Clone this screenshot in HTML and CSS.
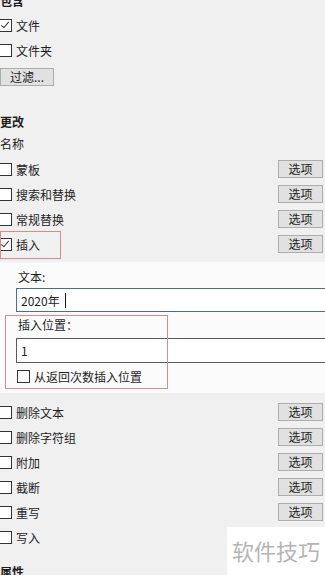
FILE: index.html
```html
<!DOCTYPE html>
<html lang="zh-CN">
<head>
  <meta charset="UTF-8" />
  <meta name="viewport" content="width=device-width, initial-scale=1.0"/>
  <title>重命名选项</title>
  <link rel="stylesheet" href="styles.css">
</head>
<body>
  <div class="page">

    <div class="heading first">包含</div>
    <div class="row"><span class="box checked"></span><span>文件</span></div>
    <div class="row"><span class="box"></span><span>文件夹</span></div>
    <div class="btn filter">过滤...</div>

    <div class="heading">更改</div>
    <div class="sub">名称</div>

    <div class="row"><span class="box"></span><span>蒙板</span><div class="btn opt">选项</div></div>
    <div class="row"><span class="box"></span><span>搜索和替换</span><div class="btn opt">选项</div></div>
    <div class="row"><span class="box"></span><span>常规替换</span><div class="btn opt">选项</div></div>
    <div class="row">
      <span class="box checked"></span><span>插入</span><div class="btn opt">选项</div>
      <div class="mark mark-insert"></div>
    </div>

    <div class="panel">
      <div class="label">文本:</div>
      <div class="field focus">2020年<span class="caret"></span></div>
      <div class="group">
        <div class="label">插入位置：</div>
        <div class="field plain">1</div>
        <div class="row inner"><span class="box"></span><span>从返回次数插入位置</span></div>
        <div class="mark mark-group"></div>
      </div>
    </div>

    <div class="rows-after">
      <div class="row"><span class="box"></span><span>删除文本</span><div class="btn opt">选项</div></div>
      <div class="row"><span class="box"></span><span>删除字符组</span><div class="btn opt">选项</div></div>
      <div class="row"><span class="box"></span><span>附加</span><div class="btn opt">选项</div></div>
      <div class="row"><span class="box"></span><span>截断</span><div class="btn opt">选项</div></div>
      <div class="row"><span class="box"></span><span>重写</span><div class="btn opt">选项</div></div>
      <div class="row"><span class="box"></span><span>写入</span></div>
    </div>

    <div class="heading last">属性</div>
  </div>

  <div class="watermark">软件技巧</div>
</body>
</html>
```

FILE: styles.css
```css
html, body {
  margin: 0;
  padding: 0;
  height: 575px;
  overflow: hidden;
}

body {
  background: #f0f0f0;
  color: #1e1e1e;
  font-family: "Noto Sans CJK SC", "Noto Sans", sans-serif;
  font-size: 12px;
  position: relative;
}

.page {
  margin-top: -11px;
}

.heading {
  font-weight: bold;
  height: 20px;
  line-height: 20px;
  margin-top: 26px;
}

.heading.first {
  margin-top: 0;
  height: 24px;
  line-height: 24px;
}

.heading.last {
  margin-top: 12px;
}

.sub {
  height: 20px;
  line-height: 20px;
  margin-top: 2px;
  margin-bottom: 3px;
}

.row {
  position: relative;
  display: flex;
  align-items: center;
  height: 25px;
}

.box {
  width: 11px;
  height: 11px;
  border: 1px solid #333;
  background: #fff;
  margin-left: -1px;
  margin-right: 4px;
  position: relative;
  flex-shrink: 0;
}

.box.checked::after {
  content: "";
  position: absolute;
  left: 3px;
  top: 0px;
  width: 3px;
  height: 7px;
  border-right: 1px solid #333;
  border-bottom: 1px solid #333;
  transform: rotate(40deg);
}

.btn {
  background: #e1e1e1;
  border: 1px solid #adadad;
  box-sizing: border-box;
  height: 18px;
  line-height: 16px;
  text-align: center;
}

.filter {
  width: 54px;
  margin-top: 5px;
}

.opt {
  position: absolute;
  left: 278px;
  top: 3px;
  width: 45px;
}

.mark {
  position: absolute;
  border: 1px solid #dc8a8a;
  box-sizing: border-box;
}

.mark-insert {
  left: 0;
  top: -1px;
  width: 61px;
  height: 28px;
}

.panel {
  background: #fbfbfb;
  margin-top: 5px;
  height: 131px;
  padding-left: 16px;
  box-sizing: border-box;
  padding-top: 6px;
}

.label {
  height: 18px;
  line-height: 18px;
  padding-left: 2px;
}

.field {
  height: 24px;
  box-sizing: border-box;
  margin-right: -10px;
  background: #fff;
  display: flex;
  align-items: center;
  padding-left: 4px;
}

.field.focus {
  margin-top: 2px;
  border: 1px solid #47708e;
}

.field.plain {
  height: 25px;
  margin-top: 4px;
  border: 1px solid #5a5a5a;
}

.caret {
  display: inline-block;
  width: 1px;
  height: 15px;
  background: #111;
  margin-left: 5px;
}

.group {
  position: relative;
  margin-top: 4px;
}

.mark-group {
  left: -11px;
  top: -1px;
  width: 163px;
  height: 74px;
}

.row.inner {
  height: 22px;
  margin-top: 2px;
}

.row.inner .box {
  margin-left: 1px;
}

.rows-after {
  margin-top: 7px;
}

.watermark {
  position: absolute;
  left: 227px;
  top: 527px;
  width: 98px;
  height: 48px;
  background: #fff;
  color: #b5b5b5;
  font-size: 22px;
  line-height: 46px;
  text-align: center;
}
```
